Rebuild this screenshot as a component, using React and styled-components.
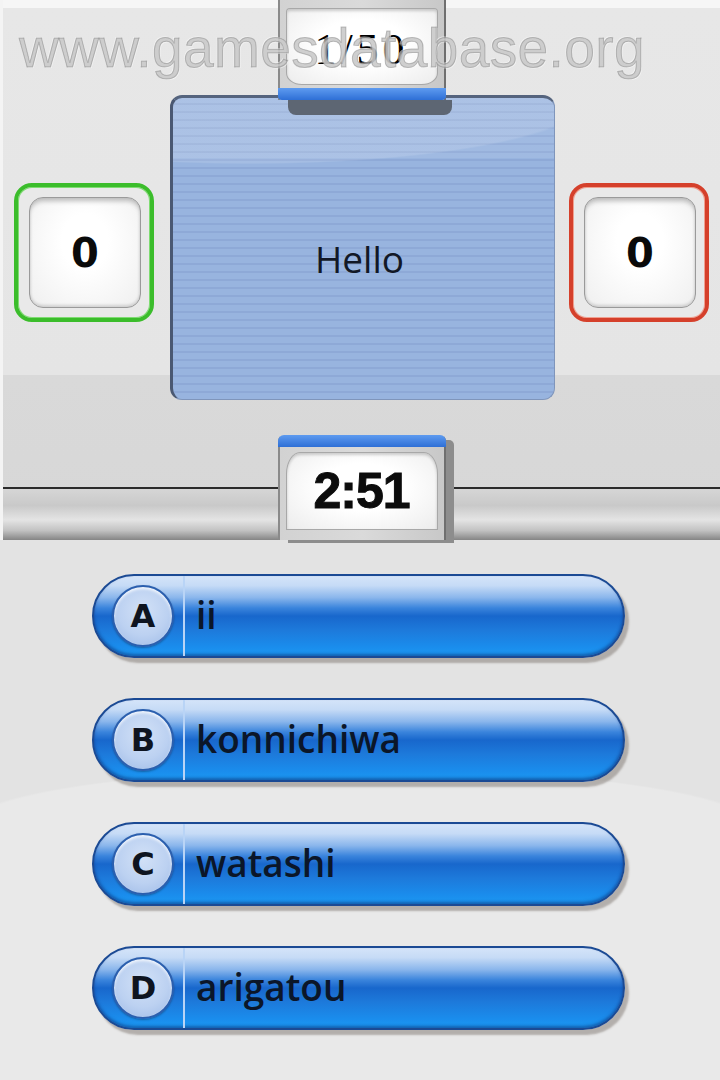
import React from 'react';
import styled, { createGlobalStyle } from 'styled-components';

const Global = createGlobalStyle`
  html, body { margin: 0; padding: 0; background: #e4e4e4; }
  body { font-family: "Open Sans", "Liberation Sans", sans-serif; }
`;

const Page = styled.div`
  width: 720px;
  height: 1080px;
  display: flex;
  flex-direction: column;
  position: relative;
  overflow: hidden;
`;

// ---- top screen ----
const TopScreen = styled.div`
  height: 540px;
  display: flex;
  flex-direction: column;
  background: linear-gradient(#f6f6f6 0 8px, #e7e7e7 8px, #e5e5e5 375px, #d9d9d9 375px, #d7d7d7 100%);
  border-left: 3px solid #f4f4f4;
  box-sizing: border-box;
`;

const Tab = styled.div`
  position: relative;
  z-index: 2;
  width: 168px;
  box-sizing: border-box;
  margin: 0 auto;
  background: linear-gradient(90deg, #8a8a8a 0 2px, #d2d2d2 2px, #dadada 50%, #c8c8c8 calc(100% - 2px), #6f6f6f calc(100% - 2px));
  display: flex;
  flex-direction: column;
`;

const CounterTab = styled(Tab)`
  height: 100px;
  padding: 8px 8px 0;
  &::after {
    content: '';
    position: absolute;
    left: 10px;
    right: -6px;
    top: 100px;
    height: 15px;
    background: #5d6673;
    border-radius: 0 0 8px 8px;
  }
`;

const TimerTab = styled(Tab)`
  height: 105px;
  padding: 0 8px 10px;
  border-radius: 6px 6px 0 0;
  box-shadow: 9px 4px 0 -1px #8d8d8d;
`;

const BlueBar = styled.div`
  height: 12px;
  margin: ${p => (p.$top ? '0 -8px 5px' : '3px -8px 0')};
  background: linear-gradient(#5e9bf0, #2e6fd6);
  border-radius: ${p => (p.$top ? '6px 6px 0 0' : '0 0 4px 4px')};
`;

const Window = styled.div`
  flex: 1;
  display: flex;
  align-items: center;
  justify-content: center;
  background: radial-gradient(ellipse at 50% 45%, #ffffff 40%, #ececec 100%);
  border: 1px solid #a8a8a8;
  border-radius: ${p => (p.$arch === 'top' ? '14px 14px 0 0 / 22px 22px 0 0' : '4px 4px 16px 16px / 4px 4px 12px 12px')};
  box-shadow: inset 0 2px 3px rgba(0, 0, 0, 0.18);
`;

const Counter = styled.span`
  font-family: "Liberation Serif", serif;
  font-size: 44px;
  color: #000;
  letter-spacing: 4px;
  margin-top: 6px;
`;

const Timer = styled.span`
  font-family: "Liberation Sans", sans-serif;
  font-weight: 700;
  font-size: 50px;
  color: #0c0c0c;
  -webkit-text-stroke: 1px #0c0c0c;
  letter-spacing: -1px;
`;

const Stage = styled.div`
  display: flex;
  align-items: flex-start;
  padding-left: 11px;
  margin-top: -5px;
`;

const ScoreFrame = styled.div`
  width: 140px;
  height: 139px;
  margin-top: 88px;
  margin-left: ${p => p.$gap}px;
  box-sizing: border-box;
  border: 4px solid ${p => p.$color};
  border-radius: 18px;
  padding: 10px 9px 10px 11px;
  background: #e9e9e9;
  box-shadow: inset 0 0 0 1px ${p => p.$inner};
  display: flex;
`;

const ScoreKey = styled.div`
  flex: 1;
  display: flex;
  align-items: center;
  justify-content: center;
  background: radial-gradient(ellipse at 50% 40%, #ffffff 30%, #efefef 100%);
  border: 1px solid #9a9a9a;
  border-radius: 14px;
  box-shadow: inset 0 5px 5px -2px rgba(0, 0, 0, 0.25), inset 0 -2px 3px rgba(0, 0, 0, 0.15);
  font-family: "DejaVu Sans", sans-serif;
  font-weight: 700;
  font-size: 40px;
  color: #0a0a0a;
`;

const Card = styled.div`
  width: 385px;
  height: 305px;
  margin-left: 16px;
  box-sizing: border-box;
  border-radius: 12px;
  border-top: 3px solid #55647e;
  border-left: 3px solid #4a5872;
  border-right: 1px solid #7f95bb;
  border-bottom: 1px solid #7f95bb;
  background:
    radial-gradient(ellipse 90% 22% at 20% 0%, rgba(255, 255, 255, 0.12) 98%, transparent 100%),
    linear-gradient(rgba(255, 255, 255, 0.08) 0 20%, transparent 20%),
    repeating-linear-gradient(#98b4df 0 5px, #8ea9d7 5px 7px, #98b4df 7px 8px);
  display: flex;
  align-items: center;
  justify-content: center;
`;

const Word = styled.span`
  font-family: "Open Sans", sans-serif;
  font-size: 37px;
  color: #121826;
  margin-top: 20px;
  margin-right: 8px;
`;

const RailRow = styled.div`
  margin-top: 35px;
  display: flex;
  align-items: flex-end;
`;

const Rail = styled.div`
  flex: 1;
  height: 53px;
  background: linear-gradient(#2b2b2b 0 2px, #d6d6d6 2px, #c9c9c9 35%, #e4e4e4 62%, #c2c2c2 82%, #858585 100%);
`;

const Watermark = styled.div`
  position: absolute;
  top: 21px;
  left: 19px;
  z-index: 5;
  font-family: "Liberation Sans", sans-serif;
  font-size: 55px;
  line-height: 1;
  letter-spacing: 0.4px;
  color: rgba(160, 160, 160, 0.5);
  -webkit-text-stroke: 1px rgba(110, 110, 110, 0.4);
  text-shadow: 1px 1px 0 rgba(255, 255, 255, 0.55), -1px -1px 0 rgba(255, 255, 255, 0.55);
  pointer-events: none;
`;

// ---- bottom screen ----
const BottomScreen = styled.div`
  flex: 1;
  display: flex;
  flex-direction: column;
  gap: 40px;
  padding: 34px 0 0 92px;
  background:
    radial-gradient(ellipse 400px 60px at 50% 288px, #e9e9e9 98%, rgba(233, 233, 233, 0) 100%),
    linear-gradient(#e3e3e3 0 288px, #e9e9e9 288px);
`;

const Answer = styled.div`
  width: 533px;
  height: 84px;
  box-sizing: border-box;
  border-radius: 42px;
  border: 2px solid #1b4a94;
  background: linear-gradient(#d4e4f9 0%, #c6dbf6 12%, #8ab6ec 27%, #3a84dc 40%, #1867cc 50%, #1d7adb 68%, #1a8cec 88%, #1b98f2 100%);
  box-shadow: 4px 5px 2px rgba(80, 70, 60, 0.35), inset 0 -2px 3px rgba(10, 40, 110, 0.5);
  display: flex;
  align-items: stretch;
  overflow: hidden;
`;

const LetterCell = styled.div`
  width: 91px;
  flex: none;
  display: flex;
  align-items: center;
  padding-left: 18px;
  box-sizing: border-box;
  border-right: 2px solid #b9d4f6;
`;

const Badge = styled.div`
  width: 62px;
  height: 62px;
  border-radius: 50%;
  box-sizing: border-box;
  border: 2px solid #2b5fae;
  background: radial-gradient(circle at 50% 40%, #d2e1f7 0%, #bcd1f1 55%, #9cb9e6 100%);
  box-shadow: inset 0 2px 3px rgba(255, 255, 255, 0.8), 0 1px 2px rgba(0, 0, 0, 0.3);
  display: flex;
  align-items: center;
  justify-content: center;
  font-family: "DejaVu Sans", sans-serif;
  font-weight: 700;
  font-size: 32px;
  color: #0e1420;
`;

const AnswerText = styled.div`
  display: flex;
  align-items: center;
  padding-left: 11px;
  font-family: "Open Sans", sans-serif;
  font-weight: 600;
  font-size: 37px;
  color: #0b1629;
  padding-bottom: 4px;
`;

const answers = [
  ['A', 'ii'],
  ['B', 'konnichiwa'],
  ['C', 'watashi'],
  ['D', 'arigatou'],
];

export default function App() {
  return (
    <Page>
      <Global />
      <TopScreen>
        <CounterTab>
          <Window $arch="bottom">
            <Counter>1/50</Counter>
          </Window>
          <BlueBar />
        </CounterTab>

        <Stage>
          <ScoreFrame $color="#3bbd2b" $inner="#7fdc72" $gap={0}>
            <ScoreKey>0</ScoreKey>
          </ScoreFrame>
          <Card>
            <Word>Hello</Word>
          </Card>
          <ScoreFrame $color="#d5402b" $inner="#f0a090" $gap={14}>
            <ScoreKey>0</ScoreKey>
          </ScoreFrame>
        </Stage>

        <RailRow>
          <Rail />
          <TimerTab>
            <BlueBar $top />
            <Window $arch="top">
              <Timer>2:51</Timer>
            </Window>
          </TimerTab>
          <Rail />
        </RailRow>
      </TopScreen>

      <BottomScreen>
        {answers.map(([letter, text]) => (
          <Answer key={letter}>
            <LetterCell>
              <Badge>{letter}</Badge>
            </LetterCell>
            <AnswerText>{text}</AnswerText>
          </Answer>
        ))}
      </BottomScreen>

      <Watermark>www.gamesdatabase.org</Watermark>
    </Page>
  );
}
